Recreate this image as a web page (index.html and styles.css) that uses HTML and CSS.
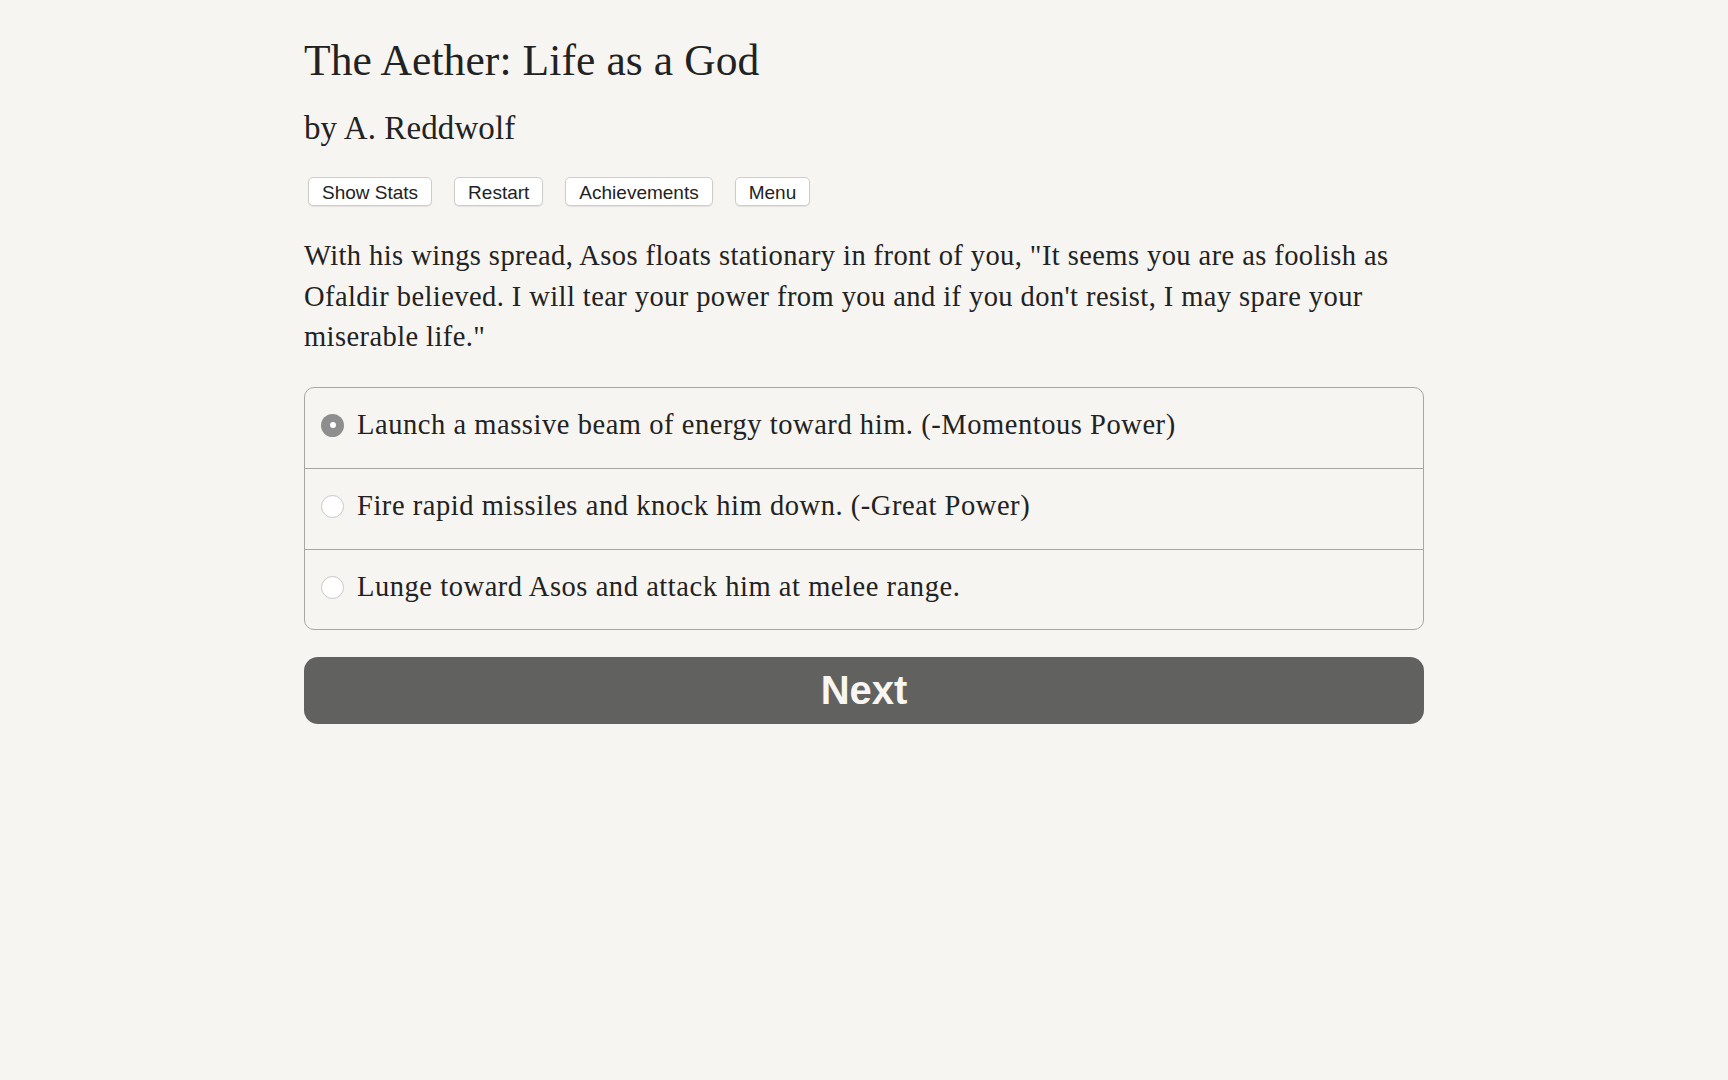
FILE: index.html
```html
<!DOCTYPE html>
<html lang="en">
<head>
<meta charset="utf-8">
<title>The Aether: Life as a God</title>
<link rel="stylesheet" href="styles.css">
</head>
<body>
<main class="page">
  <h1 class="title">The Aether: Life as a God</h1>
  <h2 class="byline">by A. Reddwolf</h2>
  <div class="toolbar">
    <button class="tool-btn" type="button">Show Stats</button>
    <button class="tool-btn" type="button">Restart</button>
    <button class="tool-btn" type="button">Achievements</button>
    <button class="tool-btn" type="button">Menu</button>
  </div>
  <p class="story">With his wings spread, Asos floats stationary in front of you, "It seems you are as foolish as Ofaldir believed. I will tear your power from you and if you don't resist, I may spare your miserable life."</p>
  <form class="choices">
    <label class="choice">
      <span class="radio selected"></span>
      <span class="choice-text">Launch a massive beam of energy toward him. (-Momentous Power)</span>
    </label>
    <label class="choice">
      <span class="radio"></span>
      <span class="choice-text">Fire rapid missiles and knock him down. (-Great Power)</span>
    </label>
    <label class="choice">
      <span class="radio"></span>
      <span class="choice-text">Lunge toward Asos and attack him at melee range.</span>
    </label>
  </form>
  <button class="next-btn" type="button">Next</button>
</main>
</body>
</html>
```
FILE: styles.css
```css
html, body {
  margin: 0;
  padding: 0;
  background: #f7f5f1;
}

body {
  color: #222;
  font-family: "Liberation Serif", "DejaVu Serif", serif;
}

.page {
  width: 1120px;
  margin: 0 auto;
  padding-top: 34px;
  display: flex;
  flex-direction: column;
}

.title {
  margin: 0;
  font-size: 43.5px;
  line-height: 52px;
  letter-spacing: 0.1px;
  font-weight: normal;
  color: #222;
}

.byline {
  margin: 22px 0 0;
  font-size: 33px;
  line-height: 40px;
  letter-spacing: 0.1px;
  font-weight: normal;
  color: #222;
}

.toolbar {
  margin: 29px 0 0 4px;
  display: flex;
  gap: 22px;
}

.tool-btn {
  font-family: "Liberation Sans", Arial, sans-serif;
  font-size: 19px;
  line-height: 28px;
  height: 29px;
  padding: 1px 13px 0;
  border: 1px solid #cfcdca;
  border-radius: 5px;
  background: #fff;
  color: #222;
  box-shadow: 0 1px 1px rgba(0, 0, 0, 0.08);
}

.story {
  margin: 30px 0 0;
  font-size: 28.5px;
  line-height: 40.5px;
  letter-spacing: 0.42px;
  color: #222;
}

.choices {
  margin: 29px 0 0;
  border: 1px solid #a8a7a5;
  border-radius: 10px;
  display: flex;
  flex-direction: column;
}

.choice {
  height: 80.5px;
  box-sizing: border-box;
  padding: 17px 0 0 16px;
  display: flex;
  align-items: flex-start;
  gap: 13px;
  font-size: 28.5px;
  line-height: 40px;
  letter-spacing: 0.55px;
  color: #222;
}

.choice + .choice {
  border-top: 1px solid #a8a7a5;
}

.radio {
  flex: none;
  width: 23px;
  height: 23px;
  margin-top: 9px;
  box-sizing: border-box;
  border-radius: 50%;
  border: 1px solid #c9c8c6;
  background: #fff;
  position: relative;
}

.radio.selected {
  border: none;
  background: #8e8e8e;
}

.radio.selected::after {
  content: "";
  position: absolute;
  left: 8.5px;
  top: 8.5px;
  width: 6px;
  height: 6px;
  border-radius: 50%;
  background: #fff;
}

.next-btn {
  margin-top: 27px;
  height: 67px;
  border: none;
  border-radius: 14px;
  background: #616160;
  color: #f8f6f2;
  font-family: "Liberation Sans", Arial, sans-serif;
  font-weight: bold;
  font-size: 40px;
  line-height: 67px;
  padding: 0;
}
```
